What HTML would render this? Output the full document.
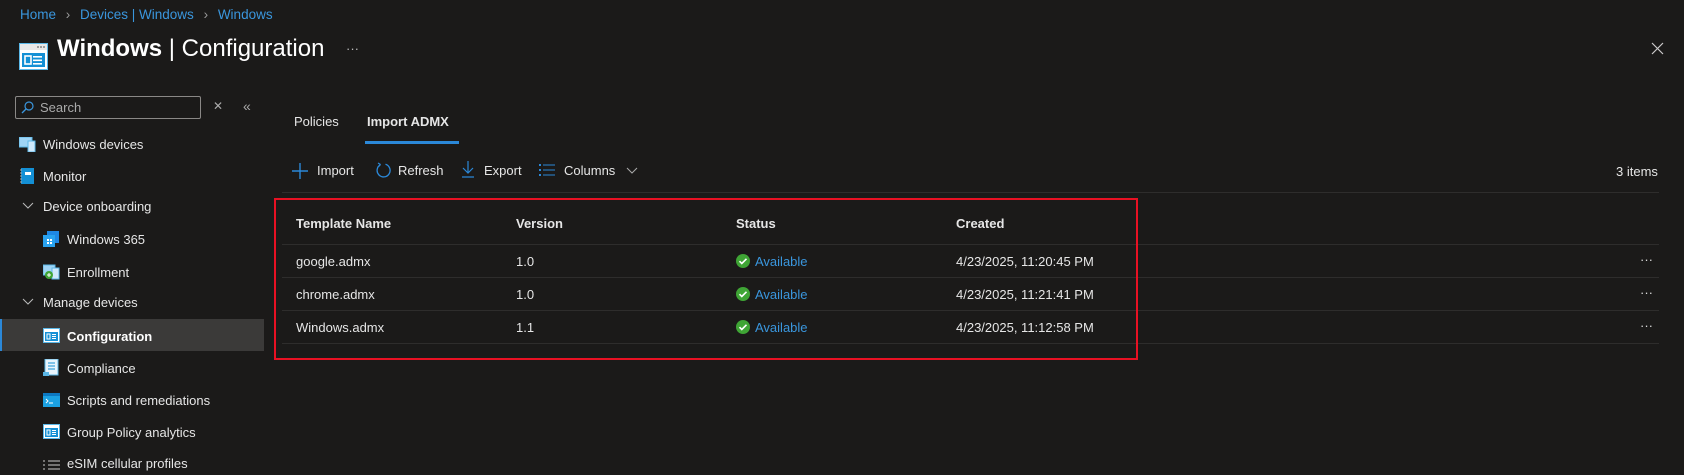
<!DOCTYPE html>
<html><head><meta charset="utf-8"><style>
*{margin:0;padding:0;box-sizing:border-box}
body{width:1684px;height:475px;background:#1b1a19;color:#e6e6e6;font-family:"Liberation Sans",sans-serif;font-size:13px;position:relative;overflow:hidden}
.a{position:absolute;white-space:nowrap;line-height:1}
.blue{color:#3a96dd}
.hl{position:absolute;height:1px;background:#2e2d2c}
.b{font-weight:bold}
</style></head><body>
<div class="a blue" style="left:20px;top:8px;font-size:13.5px">Home <span style="color:#999;margin:0 6px">&#8250;</span> Devices | Windows <span style="color:#999;margin:0 6px">&#8250;</span> Windows</div>

<svg class="a" style="left:19px;top:43px" width="29" height="27" viewBox="0 0 29 27"><rect x="0.5" y="0.5" width="28" height="26" fill="#fff" stroke="#5bb8e8"/><rect x="1" y="1" width="27" height="6" fill="#e8e8e8"/><circle cx="19" cy="4" r="0.9" fill="#666"/><circle cx="22" cy="4" r="0.9" fill="#666"/><circle cx="25" cy="4" r="0.9" fill="#666"/><rect x="3" y="10" width="23" height="14" fill="#1490d5"/><rect x="6" y="13" width="6" height="8" fill="none" stroke="#fff" stroke-width="1.6"/><rect x="14" y="13" width="9" height="1.6" fill="#fff"/><rect x="14" y="16.5" width="9" height="1.6" fill="#fff"/><rect x="14" y="20" width="9" height="1.6" fill="#fff"/></svg>
<div class="a" style="left:57px;top:37px;font-size:24px;color:#fff"><b>Windows</b> | Configuration</div>
<div class="a" style="left:346px;top:42px;color:#bbb">···</div>
<svg class="a" style="left:1651px;top:42px" width="13" height="13"><path d="M1 1L12 12M12 1L1 12" stroke="#ccc" stroke-width="1.2"/></svg>

<div class="a" style="left:15px;top:96px;width:186px;height:23px;border:1px solid #8a8886;border-radius:2px"></div>
<svg class="a" style="left:21px;top:101px" width="13" height="13"><circle cx="8" cy="5" r="4" fill="none" stroke="#3a96dd" stroke-width="1.2"/><path d="M5 8L1 12" stroke="#3a96dd" stroke-width="1.3"/></svg>
<div class="a" style="left:40px;top:101px;color:#aaa">Search</div>
<div class="a" style="left:213px;top:100px;color:#aaa;font-size:12px">✕</div>
<div class="a" style="left:243px;top:99px;color:#aaa;font-size:14px">«</div>

<svg class="a" style="left:19px;top:137px" width="17" height="15"><rect x="0" y="0" width="13" height="10" fill="#9fd4f5" stroke="#5bb8e8"/><rect x="9" y="4" width="7" height="11" fill="#cfe9fb" stroke="#5bb8e8"/></svg>
<div class="a" style="left:43px;top:138px">Windows devices</div>
<svg class="a" style="left:20px;top:168px" width="14" height="16"><rect x="1" y="0" width="13" height="16" fill="#1490d5"/><rect x="5" y="4" width="6" height="3" fill="#fff"/><path d="M0 2h2M0 5h2M0 8h2M0 11h2M0 14h2" stroke="#aaa"/></svg>
<div class="a" style="left:43px;top:170px">Monitor</div>
<svg class="a" style="left:22px;top:202px" width="12" height="8"><path d="M1 1l5 5 5-5" stroke="#bbb" fill="none"/></svg>
<div class="a" style="left:43px;top:200px">Device onboarding</div>
<svg class="a" style="left:43px;top:231px" width="16" height="16"><rect x="4" y="0" width="12" height="12" fill="#1e88e5"/><rect x="0" y="4" width="12" height="12" fill="#29a3f0"/><path d="M4 8h2v2H4zM7 8h2v2H7zM4 11h2v2H4zM7 11h2v2H7z" fill="#fff"/></svg>
<div class="a" style="left:67px;top:233px">Windows 365</div>
<svg class="a" style="left:43px;top:264px" width="17" height="16"><rect x="0" y="1" width="12" height="10" fill="#9fd4f5" stroke="#5bb8e8"/><rect x="9" y="4" width="7" height="11" fill="#cfe9fb" stroke="#5bb8e8"/><circle cx="6" cy="11" r="4" fill="#3fa535"/><path d="M6 9v4M4 11h4" stroke="#fff"/></svg>
<div class="a" style="left:67px;top:266px">Enrollment</div>
<svg class="a" style="left:22px;top:298px" width="12" height="8"><path d="M1 1l5 5 5-5" stroke="#bbb" fill="none"/></svg>
<div class="a" style="left:43px;top:296px">Manage devices</div>
<div class="a" style="left:0;top:319px;width:264px;height:32px;background:#3b3a39"></div>
<div class="a" style="left:0;top:319px;width:2px;height:32px;background:#2b88d8"></div>
<svg class="a" style="left:43px;top:328px" width="17" height="15" viewBox="0 0 17 15"><rect x="0.5" y="0.5" width="16" height="14" fill="#fff" stroke="#5bb8e8"/><rect x="2" y="4" width="13" height="9" fill="#1490d5"/><rect x="4" y="6" width="3" height="5" fill="none" stroke="#fff"/><path d="M9 6.5h4M9 8.5h4M9 10.5h4" stroke="#fff"/></svg>
<div class="a b" style="left:67px;top:330px;color:#fff">Configuration</div>
<svg class="a" style="left:43px;top:359px" width="16" height="17"><rect x="2" y="0" width="13" height="16" fill="#e8f4fc" stroke="#5bb8e8"/><path d="M5 4h7M5 7h7M5 10h7" stroke="#1490d5"/><rect x="0" y="13" width="6" height="4" fill="#5bb8e8"/></svg>
<div class="a" style="left:67px;top:362px">Compliance</div>
<svg class="a" style="left:43px;top:393px" width="17" height="14"><rect x="0" y="0" width="17" height="14" fill="#1ba1e2"/><rect x="0" y="0" width="17" height="3" fill="#0d78c0"/><path d="M3 6l2 2-2 2M6 10h4" stroke="#fff" fill="none"/></svg>
<div class="a" style="left:67px;top:394px">Scripts and remediations</div>
<svg class="a" style="left:43px;top:424px" width="17" height="15" viewBox="0 0 17 15"><rect x="0.5" y="0.5" width="16" height="14" fill="#fff" stroke="#5bb8e8"/><rect x="2" y="4" width="13" height="9" fill="#1490d5"/><rect x="4" y="6" width="3" height="5" fill="none" stroke="#fff"/><path d="M9 6.5h4M9 8.5h4M9 10.5h4" stroke="#fff"/></svg>
<div class="a" style="left:67px;top:426px">Group Policy analytics</div>
<svg class="a" style="left:43px;top:459px" width="17" height="14"><path d="M5 2h12M5 6h12M5 10h12M0 2h2M0 6h2M0 10h2" stroke="#ccc"/></svg>
<div class="a" style="left:67px;top:457px">eSIM cellular profiles</div>

<div class="a" style="left:294px;top:115px">Policies</div>
<div class="a b" style="left:367px;top:115px">Import ADMX</div>
<div class="a" style="left:365px;top:141px;width:94px;height:3px;background:#2b88d8"></div>

<svg class="a" style="left:292px;top:163px" width="16" height="16"><path d="M8 0v16M0 8h16" stroke="#2b88d8" stroke-width="1.4"/></svg>
<div class="a" style="left:317px;top:164px">Import</div>
<svg class="a" style="left:375px;top:162px" width="17" height="17"><path d="M5 2.2A6.5 6.5 0 1 0 10 1.7" stroke="#2b88d8" stroke-width="1.3" fill="none" transform="translate(0.5,0.5)"/><path d="M3 1l2.2 1.3L4 4.5" stroke="#2b88d8" stroke-width="1.2" fill="none"/></svg>
<div class="a" style="left:398px;top:164px">Refresh</div>
<svg class="a" style="left:462px;top:161px" width="12" height="17"><path d="M6 0v12M1 7l5 5 5-5M0 16h12" stroke="#2b88d8" stroke-width="1.2" fill="none"/></svg>
<div class="a" style="left:484px;top:164px">Export</div>
<svg class="a" style="left:539px;top:164px" width="16" height="12"><path d="M0 1h2M0 6h2M0 11h2" stroke="#2b88d8" stroke-width="2"/><path d="M4 1h12M4 6h12M4 11h12" stroke="#2b88d8"/></svg>
<div class="a" style="left:564px;top:164px">Columns</div>
<svg class="a" style="left:626px;top:167px" width="12" height="7"><path d="M1 1l5 5 5-5" stroke="#aaa" fill="none"/></svg>
<div class="a" style="left:1616px;top:165px">3 items</div>
<div class="hl" style="left:282px;top:192px;width:1377px"></div>

<div class="a b" style="left:296px;top:217px">Template Name</div>
<div class="a b" style="left:516px;top:217px">Version</div>
<div class="a b" style="left:736px;top:217px">Status</div>
<div class="a b" style="left:956px;top:217px">Created</div>
<div class="hl" style="left:282px;top:244px;width:1377px"></div>
<div class="hl" style="left:282px;top:277px;width:1377px"></div>
<div class="hl" style="left:282px;top:310px;width:1377px"></div>
<div class="hl" style="left:282px;top:343px;width:1377px"></div>

<div class="a" style="left:296px;top:255px">google.admx</div>
<div class="a" style="left:516px;top:255px">1.0</div>
<div class="a" style="left:296px;top:288px">chrome.admx</div>
<div class="a" style="left:516px;top:288px">1.0</div>
<div class="a" style="left:296px;top:321px">Windows.admx</div>
<div class="a" style="left:516px;top:321px">1.1</div>

<svg class="a" style="left:736px;top:254px" width="14" height="14"><circle cx="7" cy="7" r="7" fill="#3fa535"/><path d="M3.5 7.2l2.3 2.3L10.5 4.8" stroke="#fff" stroke-width="1.6" fill="none"/></svg>
<div class="a blue" style="left:755px;top:255px">Available</div>
<svg class="a" style="left:736px;top:287px" width="14" height="14"><circle cx="7" cy="7" r="7" fill="#3fa535"/><path d="M3.5 7.2l2.3 2.3L10.5 4.8" stroke="#fff" stroke-width="1.6" fill="none"/></svg>
<div class="a blue" style="left:755px;top:288px">Available</div>
<svg class="a" style="left:736px;top:320px" width="14" height="14"><circle cx="7" cy="7" r="7" fill="#3fa535"/><path d="M3.5 7.2l2.3 2.3L10.5 4.8" stroke="#fff" stroke-width="1.6" fill="none"/></svg>
<div class="a blue" style="left:755px;top:321px">Available</div>

<div class="a" style="left:956px;top:255px">4/23/2025, 11:20:45 PM</div>
<div class="a" style="left:956px;top:288px">4/23/2025, 11:21:41 PM</div>
<div class="a" style="left:956px;top:321px">4/23/2025, 11:12:58 PM</div>

<div class="a" style="left:1640px;top:253px;color:#ddd">···</div>
<div class="a" style="left:1640px;top:286px;color:#ddd">···</div>
<div class="a" style="left:1640px;top:319px;color:#ddd">···</div>

<div class="a" style="left:274px;top:198px;width:864px;height:162px;border:2px solid #e81123"></div>
</body></html>
